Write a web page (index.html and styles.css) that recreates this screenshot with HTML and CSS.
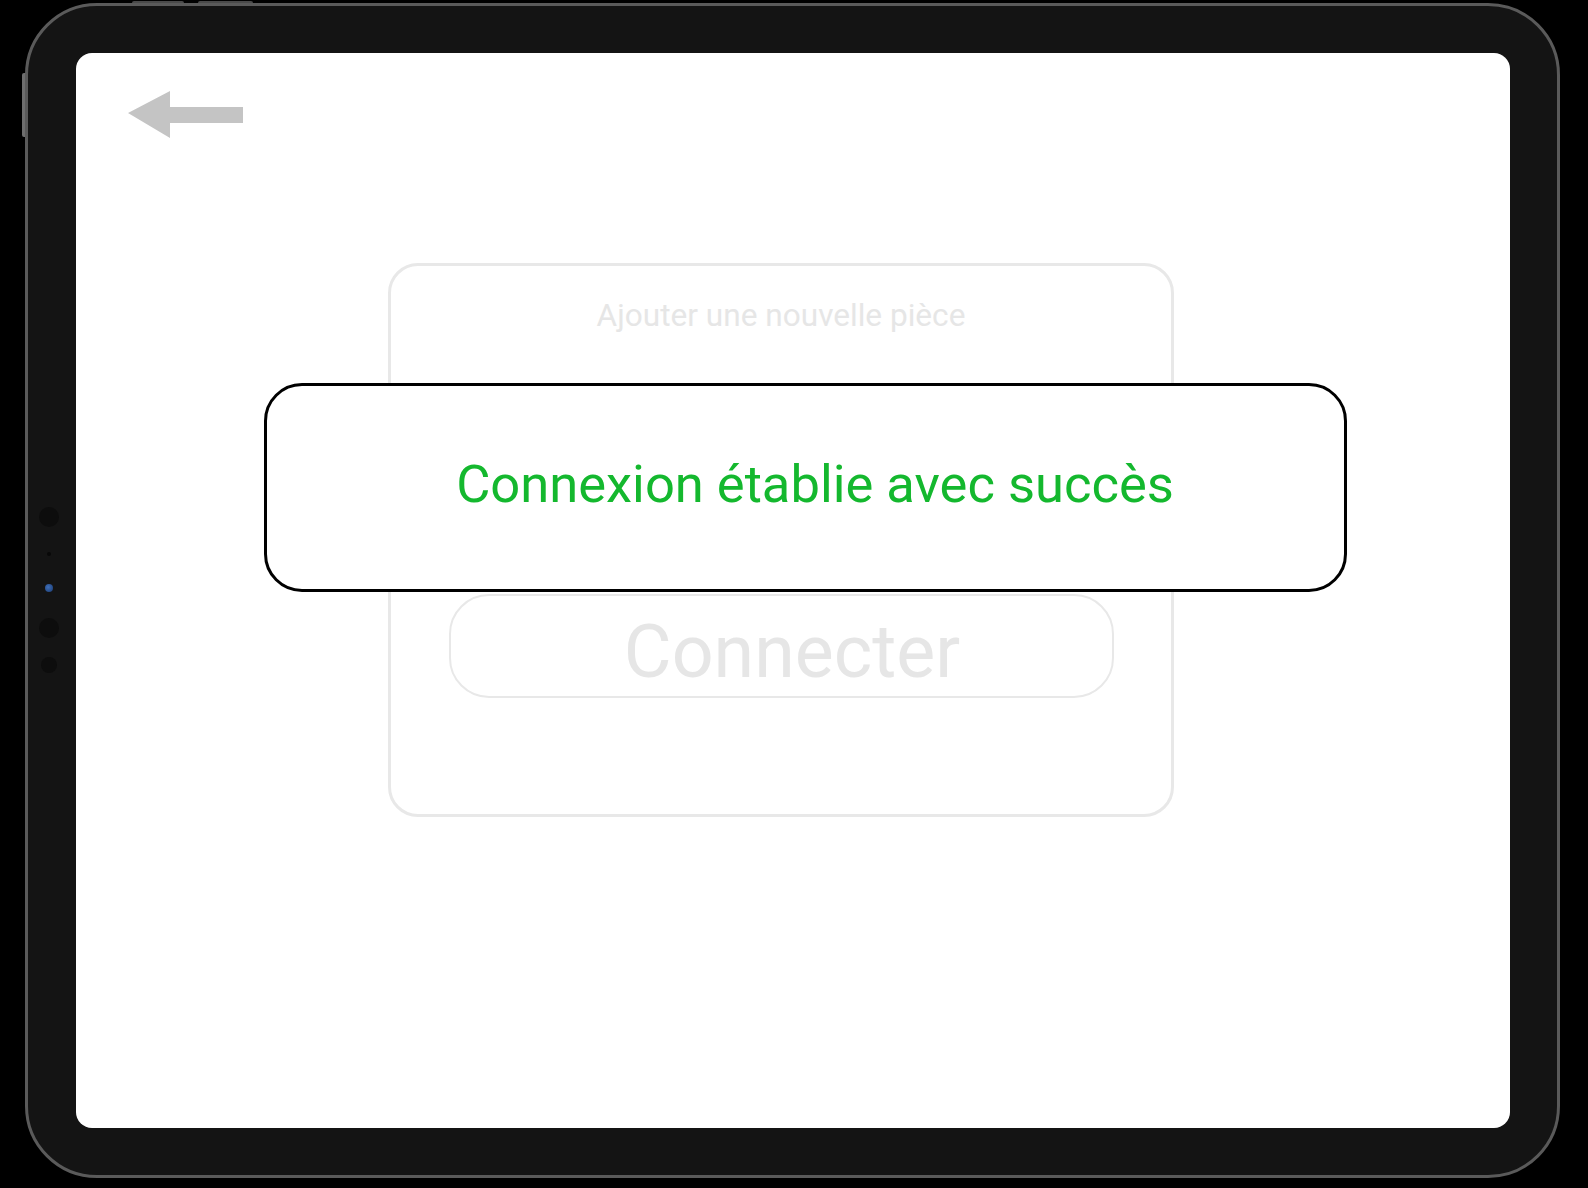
FILE: index.html
```html
<!DOCTYPE html>
<html lang="fr">
<head>
<meta charset="utf-8">
<title>Ajouter une nouvelle pièce</title>
<link rel="stylesheet" href="styles.css">
</head>
<body>
<div class="stage">
  <div class="side-button"></div>
  <div class="top-button top-button-a"></div>
  <div class="top-button top-button-b"></div>
  <div class="device">
    <div class="bezel-left">
      <span class="dot dot-lg"></span>
      <span class="dot dot-xs"></span>
      <span class="dot dot-cam"></span>
      <span class="dot dot-lg"></span>
      <span class="dot dot-md"></span>
    </div>
    <div class="screen">
      <button class="back" aria-label="Retour">
        <svg width="115" height="47" viewBox="0 0 115 47"><polygon points="0,22 42,0 42,16 115,16 115,32 42,32 42,47" fill="#c4c4c4"/></svg>
      </button>
      <div class="card">
        <div class="card-title">Ajouter une nouvelle pièce</div>
        <div class="connect">Connecter</div>
      </div>
      <div class="toast">
        <span class="toast-text">Connexion établie avec succès</span>
      </div>
    </div>
  </div>
</div>
</body>
</html>
```
FILE: styles.css
```css
* { box-sizing: border-box; }
html, body { margin: 0; padding: 0; background: #000; }
body { width: 1588px; height: 1188px; overflow: hidden; font-family: Roboto, "Liberation Sans", sans-serif; }

.stage { position: relative; width: 1588px; height: 1188px; padding: 3px 0 0 25px; }

.side-button { position: absolute; left: 22px; top: 73px; width: 4px; height: 64px; background: #6e6e6e; border-radius: 2px 0 0 2px; }
.top-button { position: absolute; top: 1px; height: 3px; background: #4a4a4a; border-radius: 2px 2px 0 0; }
.top-button-a { left: 132px; width: 52px; }
.top-button-b { left: 198px; width: 55px; }

.device {
  position: relative;
  width: 1535px;
  height: 1175px;
  border: 3px solid #5a5a5a;
  border-radius: 72px;
  background: #141414;
  display: flex;
  padding: 47px 47px 47px 0;
}

.bezel-left {
  width: 48px;
  flex: none;
  display: flex;
  flex-direction: column;
  align-items: center;
  justify-content: center;
  padding-right: 6px;
  padding-bottom: 2px;
}
.dot { display: block; border-radius: 50%; background: #0d0d0d; flex: none; }
.dot-lg { width: 20px; height: 20px; }
.dot-xs { width: 4px; height: 4px; margin-top: 25px; background: #080808; }
.dot-cam { width: 8px; height: 8px; margin-top: 28px; background: radial-gradient(circle at 40% 40%, #3f6fb8, #1a3a70); }
.dot-cam + .dot-lg { margin-top: 26px; }
.dot-md { width: 16px; height: 16px; margin-top: 19px; }

.screen {
  position: relative;
  width: 1434px;
  height: 1075px;
  background: #fff;
  border-radius: 16px;
  overflow: hidden;
  padding: 38px 0 0 52px;
}

.back {
  display: block;
  border: 0;
  padding: 0;
  background: none;
  width: 115px;
  height: 47px;
}
.back svg { display: block; }

.card {
  margin: 125px 0 0 260px;
  width: 786px;
  height: 554px;
  border: 3px solid #e8e8e8;
  border-radius: 30px;
  display: flex;
  flex-direction: column;
  align-items: center;
  padding-top: 34px;
}
.card-title {
  font-size: 31.6px;
  line-height: 32px;
  font-weight: 400;
  color: #e6e6e6;
}
.connect {
  margin-top: 262px;
  width: 665px;
  height: 104px;
  border: 2px solid #e8e8e8;
  border-radius: 40px;
  display: flex;
  align-items: center;
  justify-content: center;
  padding: 12px 0 0 22px;
  font-size: 73.5px;
  color: #e6e6e6;
}

.toast {
  position: absolute;
  left: 188px;
  top: 330px;
  width: 1083px;
  height: 209px;
  border: 3px solid #000;
  border-radius: 38px;
  background: #fff;
  display: flex;
  align-items: center;
  justify-content: center;
  padding: 0 0 8px 19px;
}
.toast-text {
  font-size: 52.5px;
  color: #14b82e;
}
```
